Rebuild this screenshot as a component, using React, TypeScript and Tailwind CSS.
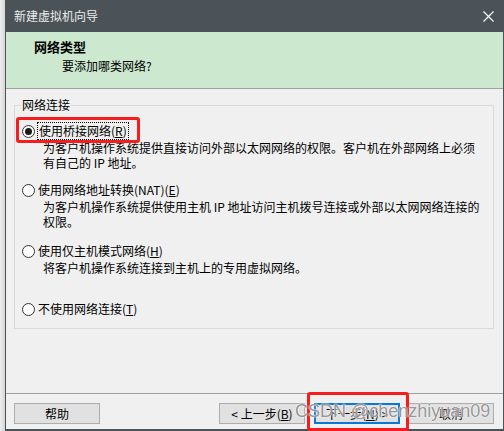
import React from 'react';

const font = { fontFamily: '"Noto Sans CJK SC", "Noto Sans", sans-serif' };

const Radio: React.FC<{ checked?: boolean }> = ({ checked }) => (
  <span className="w-[13px] h-[13px] rounded-full border border-[#333333] bg-white flex items-center justify-center shrink-0">
    {checked && <span className="w-[7px] h-[7px] rounded-full bg-[#1a1a1a]" />}
  </span>
);

const Button: React.FC<{ children: React.ReactNode; focused?: boolean }> = ({ children, focused }) => (
  <button
    className={
      focused
        ? 'w-[86px] h-[21px] bg-[#e1e1e1] border-2 border-[#0a78d7] text-[12px] leading-[16px] text-black flex items-center justify-center'
        : 'w-[86px] h-[21px] bg-[#e1e1e1] border border-[#adadad] text-[12px] leading-[16px] text-black flex items-center justify-center'
    }
  >
    {children}
  </button>
);

const App: React.FC = () => {
  return (
    <div className="w-[504px] h-[431px] flex bg-[#e6e6e6] overflow-hidden" style={font}>
      <div className="w-[5px] bg-gradient-to-r from-[#eeeeee] to-[#d6d6d6]" />
      <div className="flex-1 flex flex-col border-l border-r border-b-2 border-[#4b5358] bg-[#f0f0f0]">
        {/* title bar */}
        <div className="h-[32px] bg-[#4b5358] flex items-center justify-between pl-[8px] pr-[9px]">
          <span className="text-[12px] text-[#ececec]">新建虚拟机向导</span>
          <svg width="11" height="11" viewBox="0 0 11 11">
            <path d="M0.5 0.5 L10.5 10.5 M10.5 0.5 L0.5 10.5" stroke="#ffffff" strokeWidth="1.2" />
          </svg>
        </div>

        {/* header */}
        <div className="h-[57px] bg-[#cce8cf] border-b border-[#a0a0a0] pl-[28px] pt-[7px]">
          <div className="text-[13px] leading-[16px] font-bold text-black">网络类型</div>
          <div className="text-[12px] leading-[16px] text-black pl-[28px] mt-[3px]">要添加哪类网络?</div>
        </div>

        {/* group */}
        <fieldset className="mt-[8px] ml-[8px] mr-[9px] border border-[#d9d9d9] px-[6px] pb-[10px] text-[12px] text-black">
          <legend className="px-[1px] leading-[16px]">网络连接</legend>
          <div className="pl-[1px] mt-[9px]">
            <div className="relative flex items-center h-[18px] gap-[2px]">
              <Radio checked />
              <span className="border border-dotted border-black px-[1px] leading-[16px]">
                使用桥接网络(<span className="underline">R</span>)
              </span>
              <span className="absolute left-[-6px] top-[-5px] w-[124px] h-[26px] border-[3px] border-[#f51d1d] rounded-[3px]" />
            </div>
            <div className="pl-[21px] leading-[15px]">
              为客户机操作系统提供直接访问外部以太网网络的权限。客户机在外部网络上必须
              <br />
              有自己的 IP 地址。
            </div>

            <div className="flex items-center h-[18px] gap-[3px] mt-[11px]">
              <Radio />
              <span className="leading-[16px]">
                使用网络地址转换(NAT)(<span className="underline">E</span>)
              </span>
            </div>
            <div className="pl-[21px] leading-[15px]">
              为客户机操作系统提供使用主机 IP 地址访问主机拨号连接或外部以太网网络连接的
              <br />
              权限。
            </div>

            <div className="flex items-center h-[18px] gap-[3px] mt-[13px]">
              <Radio />
              <span className="leading-[16px]">
                使用仅主机模式网络(<span className="underline">H</span>)
              </span>
            </div>
            <div className="pl-[21px] leading-[15px]">将客户机操作系统连接到主机上的专用虚拟网络。</div>

            <div className="flex items-center h-[18px] gap-[3px] mt-[25px]">
              <Radio />
              <span className="leading-[16px]">
                不使用网络连接(<span className="underline">T</span>)
              </span>
            </div>
          </div>
        </fieldset>

        <div className="flex-1" />

        {/* footer */}
        <div className="border-t border-[#a0a0a0] h-[36px] pt-[9px] pl-[8px] pr-[9px] flex relative">
          <Button>帮助</Button>
          <div className="flex-1" />
          <Button>&lt; 上一步(<span className="underline">B</span>)</Button>
          <div className="relative ml-[9px]">
            <Button focused>
              下一步(<span className="underline">N</span>) &gt;
            </Button>
            <span className="absolute left-[-7px] top-[-11px] w-[102px] h-[39px] border-[3px] border-[#f51d1d] rounded-[3px]" />
          </div>
          <div className="ml-[8px]">
            <Button>取消</Button>
          </div>
          <span
            className="absolute left-[289px] top-[6px] text-[18px] leading-[22px] text-[#7a7a7a]/80 [text-shadow:0_0_2px_#ffffff,0_0_1px_#ffffff]"
            style={{ fontFamily: '"Liberation Sans", Arial, sans-serif' }}
          >
            CSDN @chenzhiyuan09
          </span>
        </div>
      </div>
    </div>
  );
};

export default App;
